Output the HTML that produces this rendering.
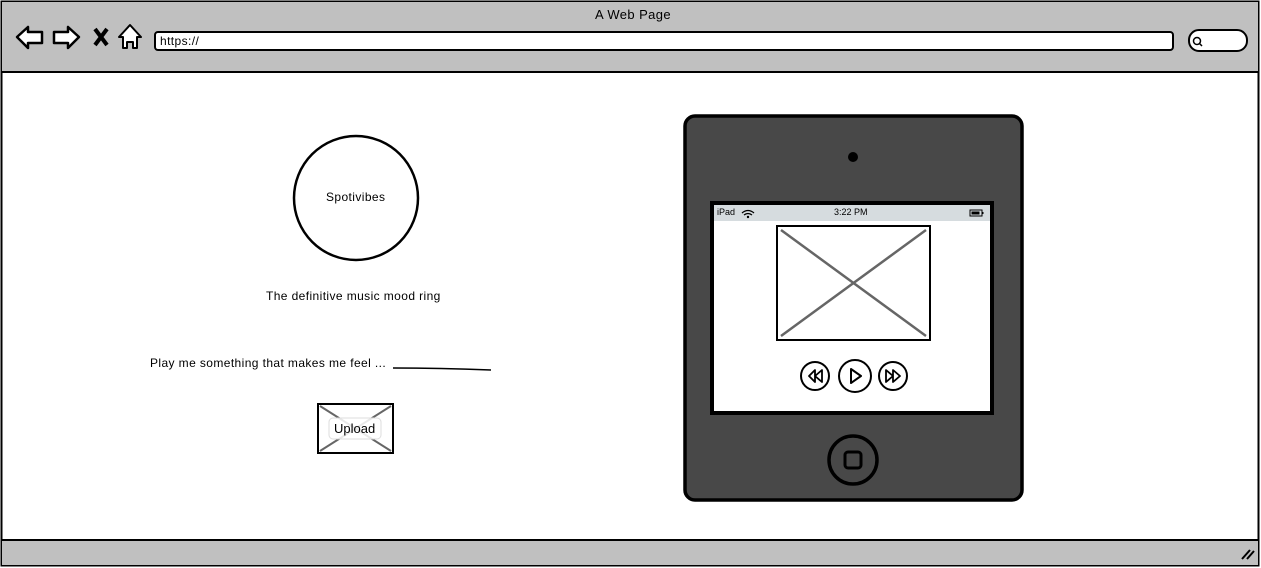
<!DOCTYPE html>
<html><head><meta charset="utf-8"><style>
*{margin:0;padding:0;box-sizing:border-box}
body{width:1261px;height:568px;background:#fff;font-family:"Liberation Sans",sans-serif;position:relative;overflow:hidden}
.t{position:absolute;font-size:12px;color:#000;white-space:nowrap;letter-spacing:0.4px}
</style></head><body>
<svg width="1261" height="568" style="position:absolute;left:0;top:0">
<rect x="1.5" y="1.5" width="1257" height="564" fill="#fff" stroke="#000" stroke-width="2"/>
<rect x="2" y="2" width="1256" height="70" fill="#c0c0c0"/>
<line x1="2" y1="72" x2="1258" y2="72" stroke="#000" stroke-width="2"/>
<rect x="2" y="540" width="1256" height="25" fill="#c0c0c0"/>
<line x1="2" y1="540" x2="1258" y2="540" stroke="#000" stroke-width="2"/>
<path d="M1242 559 L1250 550 M1247 559 L1254 551" stroke="#000" stroke-width="2"/>
<path d="M17 37 L28 27 L28 32 L42 32 L42 43 L28 43 L28 48 Z" fill="#fff" stroke="#000" stroke-width="2.5" stroke-linejoin="round"/>
<path d="M79 37 L68 27 L68 32 L54 32 L54 43 L68 43 L68 48 Z" fill="#fff" stroke="#000" stroke-width="2.5" stroke-linejoin="round"/>
<path d="M95 29 L107 45 M107 29 L95 45" stroke="#000" stroke-width="4"/>
<path d="M130 25 L141 37 L137 37 L137 48 L133 48 L133 42 L127 42 L127 48 L123 48 L123 37 L119 37 Z" fill="#fff" stroke="#000" stroke-width="2" stroke-linejoin="round"/>
<rect x="155" y="32" width="1018" height="18" rx="3" fill="#fff" stroke="#000" stroke-width="2"/>
<rect x="1189" y="30" width="58" height="21" rx="10" fill="#fff" stroke="#000" stroke-width="2"/>
<circle cx="1197" cy="41" r="3.5" fill="none" stroke="#000" stroke-width="1.5"/>
<line x1="1199" y1="43" x2="1202" y2="46" stroke="#000" stroke-width="1.5"/>
<circle cx="356" cy="198" r="62" fill="#fff" stroke="#000" stroke-width="2.5"/>
<path d="M393 368 Q440 368 491 370" stroke="#000" stroke-width="1.5" fill="none"/>
<rect x="318" y="404" width="75" height="49" fill="#fff" stroke="#000" stroke-width="2"/>
<path d="M320 406 L391 451 M391 406 L320 451" stroke="#666" stroke-width="2"/>
<rect x="329" y="418" width="52" height="21" rx="4" fill="#fff" fill-opacity="0.85" stroke="#ddd"/>
<rect x="685" y="116" width="337" height="384" rx="10" fill="#484848" stroke="#000" stroke-width="3.5"/>
<circle cx="853" cy="157" r="5" fill="#000"/>
<rect x="710" y="201" width="284" height="214" fill="#000"/>
<rect x="714" y="205" width="276" height="206" fill="#fff"/>
<rect x="714" y="205" width="276" height="16" fill="#d6dcdf"/>
<path d="M742 213 Q748 208 754 213 M744 215 Q748 212 752 215" stroke="#000" stroke-width="1.3" fill="none"/>
<circle cx="748" cy="217" r="1.2" fill="#000"/>
<rect x="970" y="210" width="12" height="6" fill="none" stroke="#000" stroke-width="1"/>
<rect x="971.5" y="211.5" width="8" height="3" fill="#000"/><rect x="982" y="212" width="1.5" height="2" fill="#000"/>
<rect x="777" y="226" width="153" height="114" fill="#fff" stroke="#000" stroke-width="2"/>
<path d="M781 230 L926 336 M926 230 L781 336" stroke="#666" stroke-width="2.5"/>
<circle cx="815" cy="376" r="14" fill="#fff" stroke="#000" stroke-width="2"/>
<circle cx="855" cy="376" r="16" fill="#fff" stroke="#000" stroke-width="2"/>
<circle cx="893" cy="376" r="14" fill="#fff" stroke="#000" stroke-width="2"/>
<path d="M815 370 L809 376 L815 382 Z M822 370 L815 376 L822 382 Z" fill="none" stroke="#000" stroke-width="1.8" stroke-linejoin="round"/>
<path d="M851 369 L861 376 L851 383 Z" fill="none" stroke="#000" stroke-width="2" stroke-linejoin="round"/>
<path d="M886 370 L893 376 L886 382 Z M893 370 L900 376 L893 382 Z" fill="none" stroke="#000" stroke-width="1.8" stroke-linejoin="round"/>
<circle cx="853" cy="460" r="24" fill="none" stroke="#000" stroke-width="3.5"/>
<rect x="845" y="452" width="16" height="16" rx="3" fill="none" stroke="#000" stroke-width="3"/>
</svg>
<div class="t" style="left:595px;top:7px;font-size:13px">A Web Page</div>
<div class="t" style="left:160px;top:34px">https://</div>
<div class="t" style="left:326px;top:190px">Spotivibes</div>
<div class="t" style="left:266px;top:289px">The definitive music mood ring</div>
<div class="t" style="left:150px;top:356px">Play me something that makes me feel ...</div>
<div class="t" style="left:334px;top:421px;font-size:13px;letter-spacing:0">Upload</div>
<div class="t" style="left:717px;top:207px;font-size:9px;letter-spacing:0">iPad</div>
<div class="t" style="left:834px;top:207px;font-size:9px;letter-spacing:0">3:22 PM</div>
</body></html>
